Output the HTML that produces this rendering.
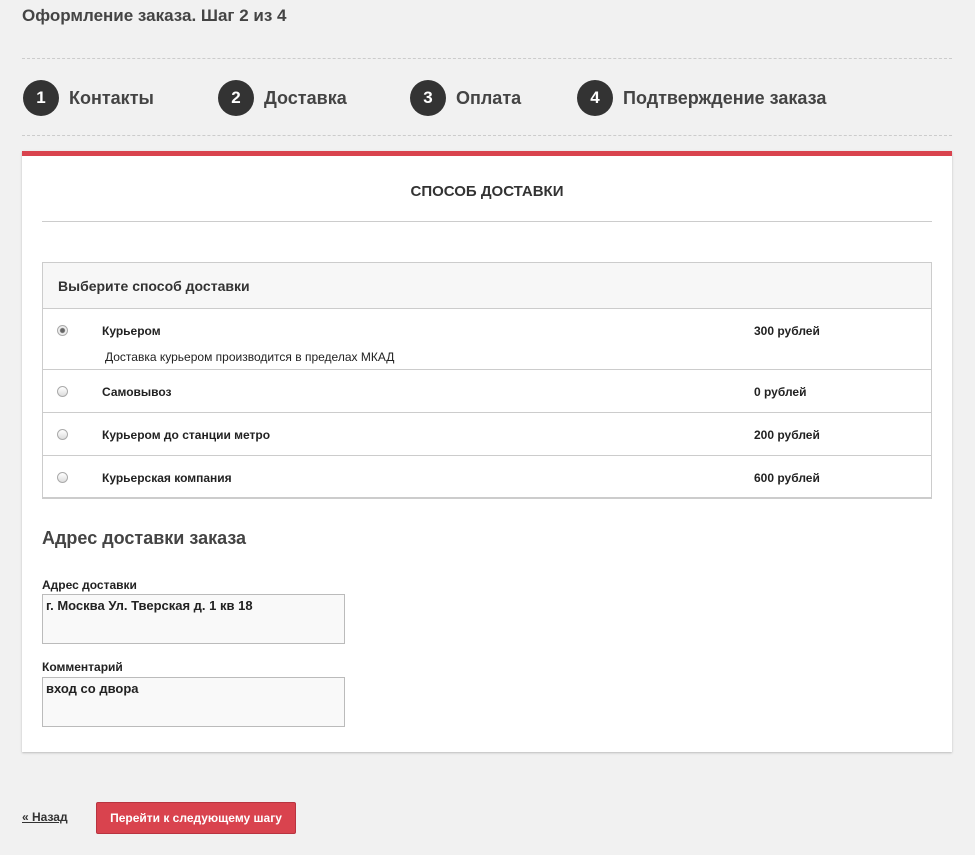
<!DOCTYPE html>
<html><head><meta charset="utf-8"><style>
*{box-sizing:border-box;margin:0;padding:0}
body{width:975px;height:855px;background:#f1f1f1;font-family:"Liberation Sans",Arial,sans-serif;color:#333;position:relative;overflow:hidden}
.abs{position:absolute}
h1{position:absolute;left:22px;top:6px;font-size:17px;font-weight:bold;color:#444}
.dash{position:absolute;left:22px;width:930px;border-top:1px dashed #ccc}
.step{position:absolute;top:80px;height:36px;display:flex;align-items:center;font-size:18px;font-weight:bold;color:#444}
.step b{width:36px;height:36px;border-radius:50%;background:#333;color:#fff;display:inline-flex;align-items:center;justify-content:center;font-size:17px;margin-right:10px}
.card{position:absolute;left:22px;top:151px;width:930px;height:601px;background:#fff;border-top:5px solid #d9434e;box-shadow:0 1px 2px #bbb}
.ttl{position:absolute;left:0;width:100%;top:27px;text-align:center;font-size:15px;font-weight:bold;color:#333}
.hr{position:absolute;left:20px;width:890px;top:65px;border-top:1px solid #ccc}
.tbl{position:absolute;left:20px;top:106px;width:890px;height:237px;border:1px solid #ccc;border-bottom:2px solid #ccc}
.th{height:46px;background:#f7f7f7;border-bottom:1px solid #ccc;font-size:14px;font-weight:bold;padding:15px 0 0 15px;color:#333}
.row{position:relative;border-bottom:1px solid #ccc;height:43px;font-size:12px;font-weight:bold;color:#222}
.row .r{position:absolute;left:14px;top:16px;width:11px;height:11px;border-radius:50%;border:1px solid #aaa;background:linear-gradient(#fff,#ddd)}
.row .n{position:absolute;left:59px;top:15px}
.row .p{position:absolute;left:711px;top:15px}
.lbl{position:absolute;left:20px;font-size:12px;font-weight:bold;color:#222}
.ta{position:absolute;left:20px;width:303px;height:50px;border:1px solid #bbb;background:#f9f9f9;font-size:13px;font-weight:bold;padding:3px 3px;color:#222}
</style></head><body>
<h1>Оформление заказа. Шаг 2 из 4</h1>
<div class="dash" style="top:58px"></div>
<div class="step" style="left:23px"><b>1</b>Контакты</div>
<div class="step" style="left:218px"><b>2</b>Доставка</div>
<div class="step" style="left:410px"><b>3</b>Оплата</div>
<div class="step" style="left:577px"><b>4</b>Подтверждение заказа</div>
<div class="dash" style="top:135px"></div>
<div class="card">
<div class="ttl">СПОСОБ ДОСТАВКИ</div>
<div class="hr"></div>
<div class="tbl">
<div class="th">Выберите способ доставки</div>
<div class="row" style="height:61px"><span class="r" style="background:radial-gradient(#666 2px,#eee 3px)"></span><span class="n">Курьером</span><span class="p">300 рублей</span><span class="abs" style="left:62px;top:41px;font-weight:normal;font-size:12px">Доставка курьером производится в пределах МКАД</span></div>
<div class="row"><span class="r"></span><span class="n">Самовывоз</span><span class="p">0 рублей</span></div>
<div class="row"><span class="r"></span><span class="n">Курьером до станции метро</span><span class="p">200 рублей</span></div>
<div class="row" style="border:0"><span class="r"></span><span class="n">Курьерская компания</span><span class="p">600 рублей</span></div>
</div>
<div class="abs" style="left:20px;top:372px;font-size:18px;font-weight:bold;color:#444">Адрес доставки заказа</div>
<div class="lbl" style="top:422px">Адрес доставки</div>
<div class="ta" style="top:438px">г. Москва Ул. Тверская д. 1 кв 18</div>
<div class="lbl" style="top:504px">Комментарий</div>
<div class="ta" style="top:521px">вход со двора</div>
</div>
<a class="abs" style="left:22px;top:810px;font-size:12px;font-weight:bold;color:#333;text-decoration:underline">« Назад</a>
<div class="abs" style="left:96px;top:802px;width:200px;height:32px;background:#d9434e;border:1px solid #b83440;border-radius:2px;color:#fff;font-size:12px;font-weight:bold;text-align:center;line-height:30px">Перейти к следующему шагу</div>
</body></html>
